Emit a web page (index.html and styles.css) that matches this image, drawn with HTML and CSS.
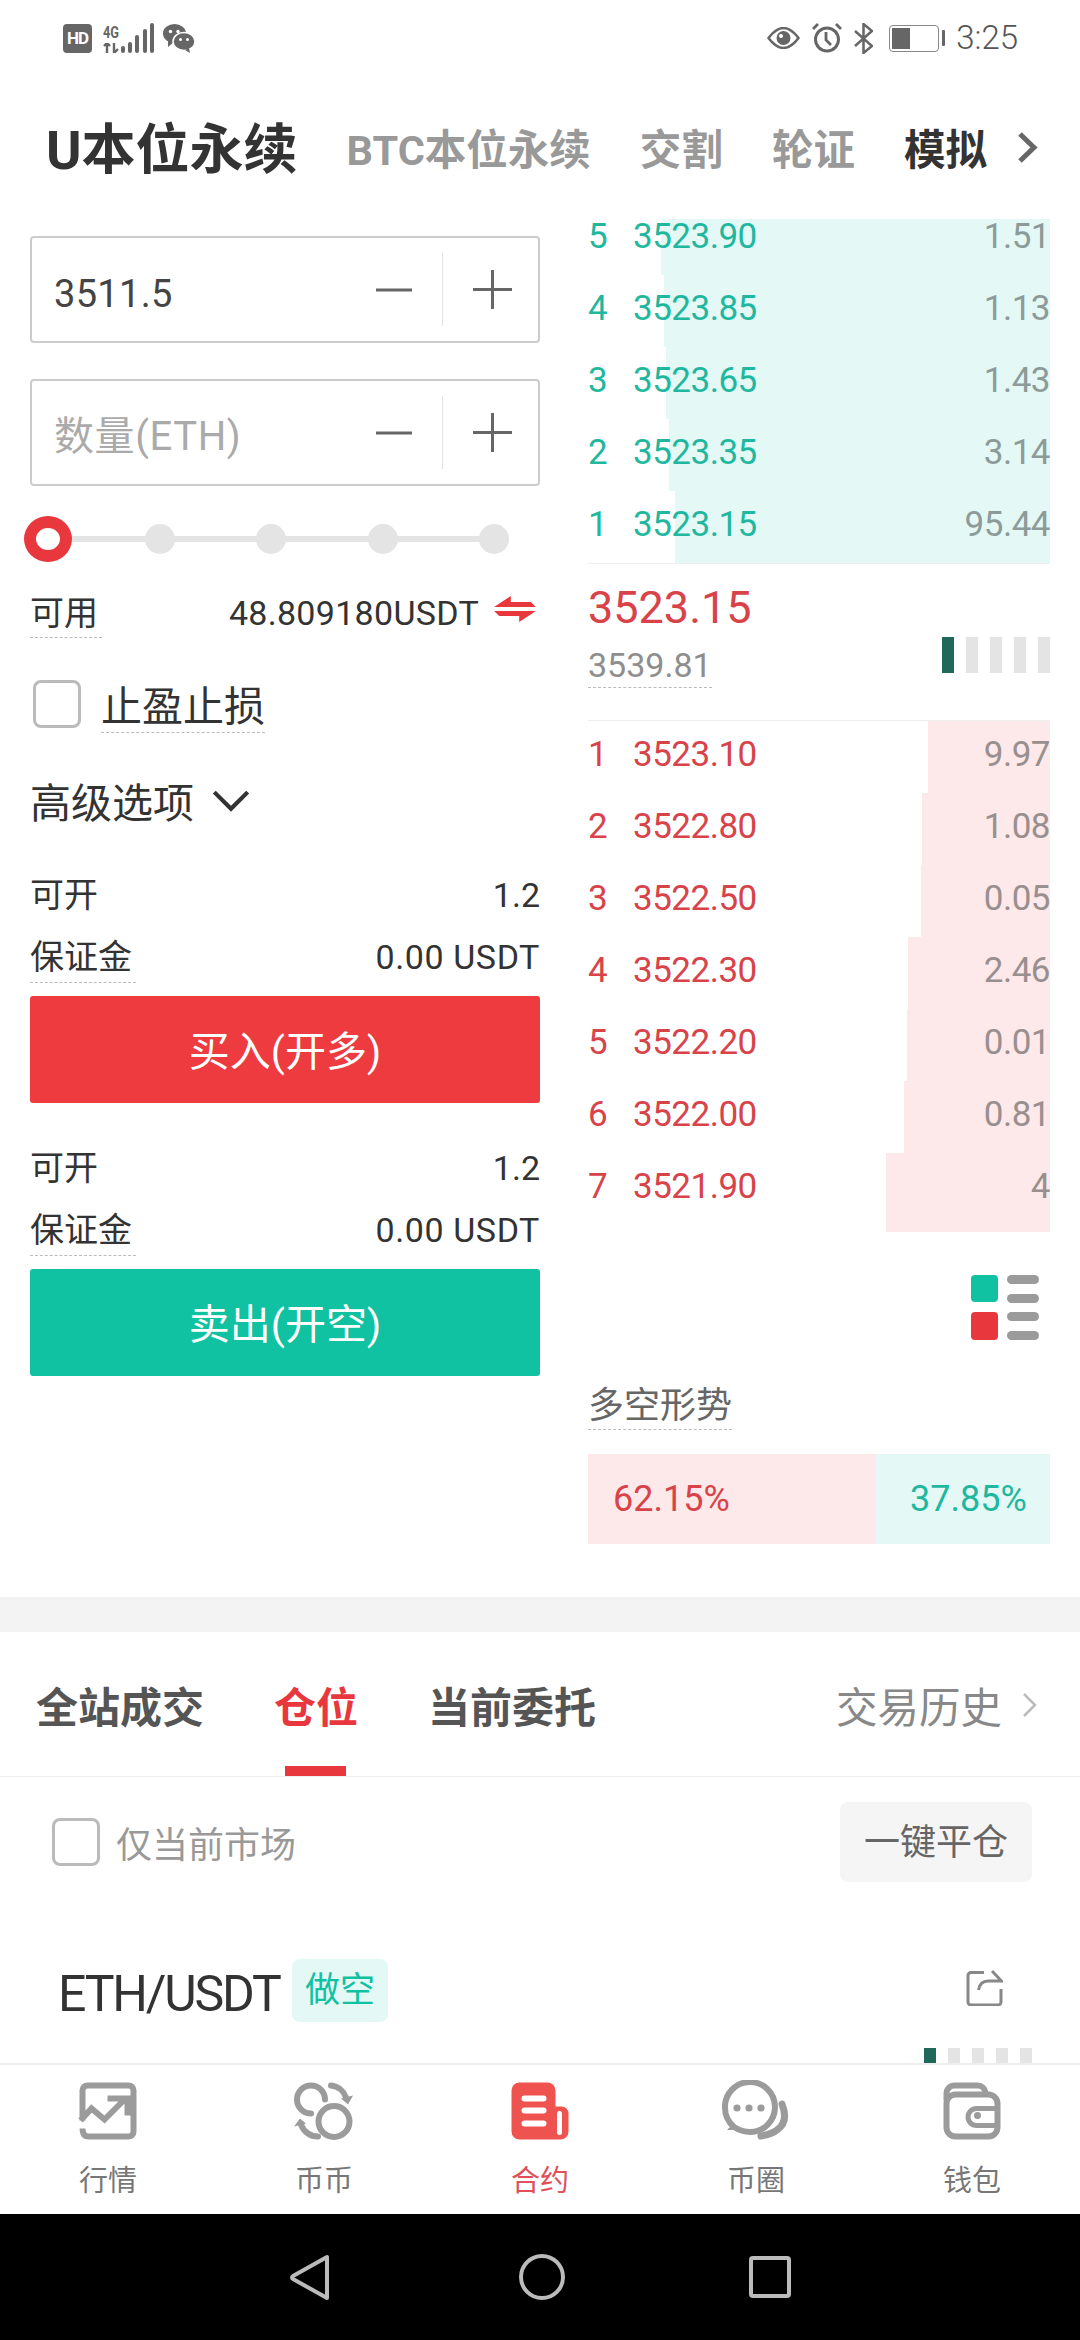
FILE: index.html
```html
<!DOCTYPE html>
<html lang="zh">
<head>
<meta charset="utf-8">
<title>U本位永续</title>
<link rel="stylesheet" href="styles.css">
</head>
<body>
<div class="page">
  <div class="status">
    <div class="st-left">
      <span class="hd">HD</span>
      <span class="net">
        <span class="net-4g">4G</span>
        <svg class="net-arrows" width="17" height="10" viewBox="0 0 17 10"><path d="M4 0V10M1 3L4 0L7 3M11 0V10M11 10L15 6" fill="none" stroke="#666" stroke-width="2.4"/></svg>
      </span>
      <svg class="signal" width="34" height="31" viewBox="0 0 34 31"><g fill="#666"><rect x="0" y="23" width="4" height="7" rx="2"/><rect x="7" y="19" width="4" height="11" rx="2"/><rect x="14" y="12" width="4" height="18" rx="2"/><rect x="22" y="6" width="4" height="24" rx="2"/><rect x="29" y="0" width="4" height="30" rx="2"/></g></svg>
      <svg class="wechat" width="32" height="29" viewBox="0 0 32 29"><ellipse cx="11.500" cy="9.500" rx="11.500" ry="9.500" fill="#666"/><path d="M5 16L5 23L11 18Z" fill="#666"/><ellipse cx="21" cy="17.500" rx="11" ry="9" fill="#666" stroke="#fff" stroke-width="1.500"/><path d="M26 24L27 29L22 26Z" fill="#666"/><g fill="#fff"><circle cx="7.500" cy="7.500" r="1.700"/><circle cx="15" cy="7.500" r="1.700"/><circle cx="17.500" cy="15.500" r="1.500"/><circle cx="24.500" cy="15.500" r="1.500"/></g></svg>
    </div>
    <div class="st-right">
      <svg width="33" height="22" viewBox="0 0 33 22"><path d="M1.500 11Q16.500 -9 31.500 11Q16.500 31 1.500 11Z" fill="none" stroke="#666" stroke-width="2.500"/><circle cx="16.500" cy="11" r="7" fill="#666"/><circle cx="14" cy="9" r="2" fill="#fff"/></svg>
      <svg width="30" height="30" viewBox="0 0 30 30"><circle cx="15" cy="16.500" r="11.500" fill="none" stroke="#666" stroke-width="3"/><path d="M14 9V17L19 22M1 6L6 1M29 6L24 1" fill="none" stroke="#666" stroke-width="2.800"/></svg>
      <svg width="19" height="31" viewBox="0 0 19 31"><path d="M1 8L18 23L9.500 30V1L18 8L1 23" fill="none" stroke="#666" stroke-width="2.500"/></svg>
      <span class="batt"><span class="batt-fill"></span></span>
      <span class="batt-nub"></span>
      <span class="clock">3:25</span>
    </div>
  </div>

  <div class="head">
    <span class="h-main">U本位永续</span>
    <span class="h-tab">BTC本位永续</span>
    <span class="h-tab">交割</span>
    <span class="h-tab">轮证</span>
    <span class="h-tab h-dark">模拟</span>
    <svg class="h-more" width="23" height="33" viewBox="0 0 23 33"><path d="M5 3L19 16.500L5 30" fill="none" stroke="#666" stroke-width="5"/></svg>
  </div>

  <div class="trade">
    <div class="form">
      <div class="field">
        <span class="f-val">3511.5</span>
        <svg class="f-minus" width="36" height="4" viewBox="0 0 36 4"><rect width="36" height="3" y="0.500" fill="#666"/></svg>
        <span class="f-div"></span>
        <svg class="f-plus" width="39" height="39" viewBox="0 0 39 39"><path d="M0 19.500H39M19.500 0V39" stroke="#666" stroke-width="3"/></svg>
      </div>
      <div class="field field-2">
        <span class="f-val f-ph">数量(ETH)</span>
        <svg class="f-minus" width="36" height="4" viewBox="0 0 36 4"><rect width="36" height="3" y="0.500" fill="#666"/></svg>
        <span class="f-div"></span>
        <svg class="f-plus" width="39" height="39" viewBox="0 0 39 39"><path d="M0 19.500H39M19.500 0V39" stroke="#666" stroke-width="3"/></svg>
      </div>
      <div class="slider">
        <span class="stop"><span class="ring"></span></span>
        <span class="stop"><span class="dot"></span></span>
        <span class="stop"><span class="dot"></span></span>
        <span class="stop"><span class="dot"></span></span>
        <span class="stop"><span class="dot"></span></span>
      </div>
      <div class="avail">
        <span class="dash">可用</span>
        <span class="avail-val">48.809180USDT</span>
        <svg class="swap" width="44" height="30" viewBox="0 0 42 30" preserveAspectRatio="none"><path d="M1 13L17 2V8H36L41 13ZM41 17L25 28V22H6L1 17Z" fill="#e8383d"/></svg>
      </div>
      <div class="tpsl">
        <span class="check"></span>
        <span class="tpsl-label">止盈止损</span>
      </div>
      <div class="adv">
        <span>高级选项</span>
        <svg width="38" height="24" viewBox="0 0 36 23"><path d="M2 3L18 19L34 3" fill="none" stroke="#333" stroke-width="4"/></svg>
      </div>
      <div class="kv kv-1"><span>可开</span><span>1.2</span></div>
      <div class="kv kv-m"><span class="dash">保证金</span><span class="kv-val">0.00 USDT</span></div>
      <div class="btn btn-buy">买入(开多)</div>
      <div class="kv kv-2"><span>可开</span><span>1.2</span></div>
      <div class="kv kv-m"><span class="dash">保证金</span><span class="kv-val">0.00 USDT</span></div>
      <div class="btn btn-sell">卖出(开空)</div>
    </div>

    <div class="book">
      <div class="asks">
        <div class="row ask row-cut"><i class="bar" style="width:389px"></i><span class="idx">5</span><span class="px">3523.90</span><span class="qty">1.51</span></div>
        <div class="row ask"><i class="bar" style="width:386px"></i><span class="idx">4</span><span class="px">3523.85</span><span class="qty">1.13</span></div>
        <div class="row ask"><i class="bar" style="width:384px"></i><span class="idx">3</span><span class="px">3523.65</span><span class="qty">1.43</span></div>
        <div class="row ask"><i class="bar" style="width:381px"></i><span class="idx">2</span><span class="px">3523.35</span><span class="qty">3.14</span></div>
        <div class="row ask"><i class="bar" style="width:375px"></i><span class="idx">1</span><span class="px">3523.15</span><span class="qty">95.44</span></div>
      </div>
      <div class="mid">
        <div class="mid-left">
          <div class="last">3523.15</div>
          <span class="dash index">3539.81</span>
        </div>
        <div class="ticks"><i class="on"></i><i></i><i></i><i></i><i></i></div>
      </div>
      <div class="bids">
        <div class="row bid"><i class="bar" style="width:122px"></i><span class="idx">1</span><span class="px">3523.10</span><span class="qty">9.97</span></div>
        <div class="row bid"><i class="bar" style="width:128px"></i><span class="idx">2</span><span class="px">3522.80</span><span class="qty">1.08</span></div>
        <div class="row bid"><i class="bar" style="width:129px"></i><span class="idx">3</span><span class="px">3522.50</span><span class="qty">0.05</span></div>
        <div class="row bid"><i class="bar" style="width:142px"></i><span class="idx">4</span><span class="px">3522.30</span><span class="qty">2.46</span></div>
        <div class="row bid"><i class="bar" style="width:143px"></i><span class="idx">5</span><span class="px">3522.20</span><span class="qty">0.01</span></div>
        <div class="row bid"><i class="bar" style="width:146px"></i><span class="idx">6</span><span class="px">3522.00</span><span class="qty">0.81</span></div>
        <div class="row bid row-end"><i class="bar" style="width:164px"></i><span class="idx">7</span><span class="px">3521.90</span><span class="qty">4</span></div>
      </div>
      <div class="depth-switch">
        <svg width="68" height="65" viewBox="0 0 68 65"><rect width="27" height="27" rx="4" fill="#10c2a2"/><rect y="37" width="27" height="28" rx="4" fill="#e8383d"/><g fill="#9b9b9b"><rect x="36" width="32" height="9" rx="4.500"/><rect x="36" y="19" width="32" height="9" rx="4.500"/><rect x="36" y="37" width="32" height="9" rx="4.500"/><rect x="36" y="56" width="32" height="9" rx="4.500"/></g></svg>
      </div>
      <span class="dash trend-title">多空形势</span>
      <div class="ratio">
        <span class="r-long">62.15%</span>
        <span class="r-short">37.85%</span>
      </div>
    </div>
  </div>

  <div class="band"></div>

  <div class="content">
    <div class="tabs">
      <span class="tab">全站成交</span>
      <span class="tab tab-on">仓位</span>
      <span class="tab">当前委托</span>
      <span class="tab-hist">交易历史
        <svg width="15" height="26" viewBox="0 0 15 26"><path d="M2 2L13 13L2 24" fill="none" stroke="#bbb" stroke-width="2.500"/></svg>
      </span>
    </div>
    <div class="filter">
      <span class="check"></span>
      <span class="filter-label">仅当前市场</span>
      <span class="close-all">一键平仓</span>
    </div>
    <div class="pos-head">
      <span class="pair">ETH/USDT</span>
      <span class="side">做空</span>
      <svg class="share" width="37" height="36" viewBox="0 0 37 36"><path d="M18 2.500H5A3 3 0 0 0 2 5.500V32A3 3 0 0 0 5 35H32A3 3 0 0 0 35 32V19M26 1L35.500 11H22Q14 11 12.500 20" fill="none" stroke="#888" stroke-width="3"/></svg>
    </div>
    <div class="ticks ticks-pos"><i class="on"></i><i></i><i></i><i></i><i></i></div>
  </div>

  <div class="nav">
    <div class="nav-item">
      <svg class="nav-ic" width="68" height="62" viewBox="-5.500 -2.500 68 62"><path d="M3 38V8A5 5 0 0 1 8 3H49A5 5 0 0 1 54 8V49A5 5 0 0 1 49 54H9Q3 54 3 46M1 38L12 26L25 37L45 17M28 16H48V33" fill="none" stroke="#9b9b9b" stroke-width="6"/></svg>
      <span>行情</span>
    </div>
    <div class="nav-item">
      <svg class="nav-ic" width="68" height="62" viewBox="-4 -2.500 68 62"><g fill="none" stroke="#9b9b9b" stroke-width="6" stroke-linecap="round"><path d="M31 17A14 14 0 1 0 17 31"/><circle cx="40" cy="39" r="15.500"/><path d="M37 3A18 18 0 0 1 52 15"/><path d="M24 54A18 18 0 0 1 7 42"/></g><path d="M47 16L59 13L54 22ZM12 41L0 44L6 36Z" fill="#9b9b9b"/></svg>
      <span>币币</span>
    </div>
    <div class="nav-item nav-on">
      <svg class="nav-ic" width="68" height="62" viewBox="-5.500 -2.500 68 62"><path d="M8 0H36A8 8 0 0 1 44 8V24H50A7 7 0 0 1 57 31V49A8 8 0 0 1 49 57H8A8 8 0 0 1 0 49V8A8 8 0 0 1 8 0Z" fill="#ef5350"/><path d="M13 16H32M13 28H32M13 41H32" stroke="#fff" stroke-width="6" stroke-linecap="round"/><path d="M48 31V50" stroke="#fff" stroke-width="5" stroke-linecap="round"/></svg>
      <span>合约</span>
    </div>
    <div class="nav-item">
      <svg class="nav-ic" width="68" height="62" viewBox="0 0 68 62"><g fill="none" stroke="#9b9b9b" stroke-linecap="round"><path stroke-width="6" d="M12 47Q3 39 3 28A25 25 0 1 1 28 52Q20 52 12 47"/><path stroke-width="7" d="M60 24Q67 42 55 50Q50 54 39 56"/></g><path d="M12 43L5 50H17Z" fill="#9b9b9b"/><g fill="#9b9b9b"><circle cx="15" cy="28" r="3.600"/><circle cx="27" cy="28" r="3.600"/><circle cx="39" cy="28" r="3.600"/></g></svg>
      <span>币圈</span>
    </div>
    <div class="nav-item">
      <svg class="nav-ic" width="68" height="62" viewBox="-5.500 -2.500 68 62"><g fill="none" stroke="#9b9b9b" stroke-width="6"><path d="M3 18V11A8 8 0 0 1 11 3H34A8 8 0 0 1 42 10"/><rect x="3" y="12" width="51" height="42" rx="9"/><path stroke-width="5" d="M52 26H33A8.500 8.500 0 0 0 33 43H52"/></g><circle cx="34" cy="33" r="3.500" fill="#9b9b9b"/></svg>
      <span>钱包</span>
    </div>
  </div>

  <div class="sysbar">
    <svg width="40" height="47" viewBox="0 0 40 47"><path d="M37 3V44L3 25Q1 23.500 3 22Z" fill="none" stroke="#bbb" stroke-width="4" stroke-linejoin="round"/></svg>
    <svg class="sys-home" width="46" height="46" viewBox="0 0 46 46"><circle cx="23" cy="23" r="21" fill="none" stroke="#bbb" stroke-width="4"/></svg>
    <svg width="42" height="42" viewBox="0 0 42 42"><rect x="2" y="2" width="38" height="38" rx="2" fill="none" stroke="#bbb" stroke-width="4"/></svg>
  </div>
</div>
</body>
</html>
```
FILE: styles.css
```css
* { box-sizing: border-box; }
html, body { margin: 0; padding: 0; background: #fff; }
body { font-family: Roboto, "Noto Sans CJK SC", sans-serif; color: #333; }
.page { width: 1080px; height: 2340px; display: flex; flex-direction: column; overflow: hidden; }

.status { height: 76px; flex: none; display: flex; align-items: center; justify-content: space-between; padding: 0 62px 0 63px; }
.st-left, .st-right { display: flex; align-items: center; }
.hd { width: 29px; height: 29px; background: #666; color: #fff; border-radius: 4px; font-size: 17px; font-weight: 700; line-height: 29px; text-align: center; letter-spacing: -1px; }
.net { display: flex; flex-direction: column; width: 18px; margin-left: 11px; }
.net-4g { font-size: 16px; line-height: 17px; font-weight: 700; color: #666; transform: scaleX(.8); transform-origin: left; }
.net-arrows { margin-top: 2px; }
.wechat { margin-left: 8px; }
.st-right svg { flex: none; }
.st-right svg + svg { margin-left: 12px; }
.batt { width: 50px; height: 27px; margin-left: 16px; border: 1.500px solid #888; border-radius: 4px; padding: 2px; }
.batt-fill { display: block; width: 18px; height: 100%; background: #666; }
.batt-nub { width: 3px; height: 16px; margin-left: 3px; background: #666; border-radius: 1px; }
.clock { font-size: 33px; font-weight: 300; color: #555; margin-left: 11px; line-height: 40px; }

.head { height: 143px; flex: none; display: flex; align-items: center; padding: 6px 0 0 46px; gap: 49px; font-weight: 700; }
.h-main { font-size: 54px; color: #333; line-height: 70px; }
.h-tab { font-size: 41.500px; color: #999; line-height: 56px; }
.h-dark { color: #333; }
.h-more { margin-left: -21px; margin-top: -6px; }

.trade { height: 1378px; flex: none; display: flex; padding-left: 30px; }
.form { width: 510px; flex: none; padding-top: 17px; }
.field { height: 107px; border: 2px solid #ccc; border-radius: 4px; display: flex; align-items: center; padding: 0 26px 0 22px; }
.field-2 { margin-top: 36px; }
.f-val { flex: 1; font-size: 38px; color: #444; line-height: 50px; padding-top: 8px; letter-spacing: .3px; }
.f-ph { font-size: 40px; color: #aaa; letter-spacing: .6px; }
.f-minus { flex: none; }
.f-div { width: 1px; height: 73px; background: #e2e2e2; margin: 0 30px; flex: none; }
.f-plus { flex: none; }

.slider { position: relative; display: flex; justify-content: space-between; align-items: center; width: 494px; height: 48px; margin: 29px 0 -1px -6px; }
.slider::before { content: ""; position: absolute; left: 24px; right: 24px; top: 21px; height: 6px; background: #e4e4e4; }
.stop { position: relative; width: 48px; display: flex; justify-content: center; }
.ring { width: 48px; height: 46px; border: 12px solid #e8383d; border-radius: 50%; background: #fff; }
.dot { width: 30px; height: 30px; border-radius: 50%; background: #e4e4e4; }

.dash { display: inline-block; border-bottom: 1px dashed #bbb; }
.avail { display: flex; align-items: flex-start; margin-top: 30px; height: 46px; font-size: 34px; line-height: 42px; color: #333; }
.avail .dash { padding-bottom: 3px; width: 72px; }
.avail-val { margin-left: auto; letter-spacing: .3px; }
.swap { margin: 2px 3px 0 14px; flex: none; }
.tpsl { display: flex; margin-top: 42px; padding-left: 3px; }
.check { width: 48px; height: 48px; border: 3px solid #bbb; border-radius: 8px; flex: none; }
.tpsl-label { margin: 2px 0 0 20px; font-size: 41px; line-height: 50px; border-bottom: 1px dashed #bbb; color: #333; }
.adv { display: flex; align-items: center; gap: 18px; margin-top: 46px; font-size: 41px; line-height: 50px; color: #333; }
.adv svg { margin-top: -6px; }
.kv { display: flex; justify-content: space-between; align-items: flex-start; font-size: 34px; line-height: 40px; color: #333; }
.kv-1 { margin-top: 46px; }
.kv-2 { margin-top: 45px; }
.kv-m { margin-top: 22px; }
.kv-m .dash { padding-bottom: 5px; width: 106px; }
.kv-val { letter-spacing: .6px; }
.btn { height: 107px; border-radius: 3px; color: #fff; font-size: 41px; line-height: 113px; text-align: center; margin-top: 13px; }
.btn-buy { background: #ee3b40; }
.btn-sell { background: #10c2a2; }

.book { width: 462px; flex: none; margin-left: 48px; display: flex; flex-direction: column; align-items: stretch; }
.row { position: relative; height: 72px; display: flex; align-items: center; padding-bottom: 4px; font-size: 35px; line-height: 40px; letter-spacing: -.5px; }
.row span { position: relative; }
.bar { position: absolute; top: 0; bottom: 0; right: 0; }
.ask .bar { background: #e4f8f5; }
.bid .bar { background: #fde9e9; }
.ask { color: #1fb89f; }
.bid { color: #d8434a; }
.row-cut { height: 56px; padding-bottom: 20px; }
.row-end { height: 79px; padding-bottom: 11px; }
.idx { width: 45px; }
.qty { margin-left: auto; color: #8c9b99; }
.bid .qty { color: #9a8f8f; }
.mid { height: 158px; border-top: 1px solid #eee; border-bottom: 1px solid #eee; display: flex; justify-content: space-between; align-items: flex-start; padding-top: 16px; }
.last { font-size: 45px; line-height: 56px; color: #d8434a; }
.index { font-size: 34px; line-height: 44px; margin-top: 7px; color: #8e8e8e; }
.ticks { display: flex; gap: 12px; }
.ticks i { display: block; width: 12px; height: 36px; background: #e4e4e4; }
.ticks .on { background: #20695a; }
.mid .ticks { margin-top: 57px; }
.depth-switch { display: flex; justify-content: flex-end; padding-right: 11px; margin-top: 43px; }
.trend-title { align-self: flex-start; margin-top: 43px; font-size: 36px; line-height: 46px; color: #666; }
.ratio { display: flex; height: 90px; margin-top: 24px; font-size: 36px; line-height: 90px; }
.r-long { width: 288px; background: #fde9e9; color: #d8434a; padding-left: 25px; }
.r-short { flex: 1; background: #e4f8f5; color: #1fb89f; padding-left: 34px; }

.band { height: 35px; flex: none; background: #f3f3f3; }

.content { flex: 1; min-height: 0; overflow: hidden; }
.tabs { height: 145px; display: flex; align-items: center; gap: 70px; padding: 0 43px 0 36px; border-bottom: 1px solid #eee; }
.tab { position: relative; font-size: 42px; font-weight: 700; color: #555; line-height: 153px; height: 144px; }
.tab-on { color: #e8383d; }
.tab-on::after { content: ""; position: absolute; left: 11px; right: 12px; bottom: 0; height: 10px; background: #e8383d; }
.tab-hist { margin-left: auto; display: flex; align-items: center; gap: 20px; font-size: 41.500px; color: #888; padding-top: 2px; }
.filter { display: flex; align-items: center; padding: 25px 48px 0 52px; }
.filter-label { font-size: 36px; color: #999; margin-left: 16px; }
.close-all { margin-left: auto; width: 192px; height: 80px; border-radius: 8px; background: #f5f5f5; color: #666; font-size: 36px; line-height: 82px; text-align: center; }
.pos-head { display: flex; align-items: center; height: 63px; margin-top: 77px; padding: 0 77px 0 58px; }
.pair { font-size: 50px; color: #333; letter-spacing: -2.200px; width: 222px; flex: none; line-height: 66px; white-space: nowrap; margin-top: 6px; }
.side { width: 96px; height: 63px; margin-left: 12px; border-radius: 8px; background: #e4f8f5; color: #10c2a2; font-size: 35px; line-height: 63px; text-align: center; }
.share { margin-left: auto; margin-top: -6px; }
.ticks-pos { justify-content: flex-end; padding-right: 48px; margin-top: 26px; }

.nav { height: 151px; flex: none; border-top: 2px solid #eee; background: #fff; display: flex; padding-top: 15px; }
.nav-item { width: 216px; display: flex; flex-direction: column; align-items: center; font-size: 29px; color: #777; line-height: 40px; }
.nav-item span { margin-top: 19px; }
.nav-on { color: #e0505a; }
.nav-ic { display: block; }

.sysbar { height: 126px; flex: none; background: #000; display: flex; align-items: center; justify-content: center; }
.sys-home { margin: 0 184px 0 189px; }
```
